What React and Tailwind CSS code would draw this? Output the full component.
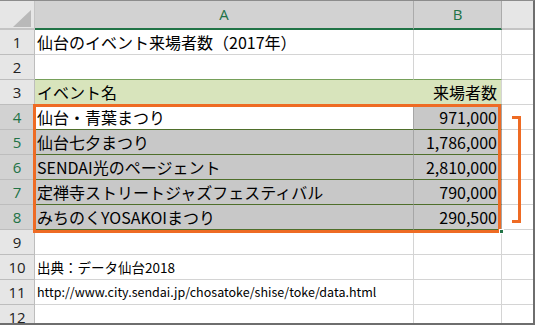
import React from 'react';

const rows = [
  { a: '仙台・青葉まつり', b: '971,000' },
  { a: '仙台七夕まつり', b: '1,786,000' },
  { a: 'SENDAI光のページェント', b: '2,810,000' },
  { a: '定禅寺ストリートジャズフェスティバル', b: '790,000' },
  { a: 'みちのくYOSAKOIまつり', b: '290,500' },
];

const RowHead = ({ n, selected }) => (
  <div
    className={`w-[35px] shrink-0 flex items-center justify-center border-r border-b border-[#bdbdbd] font-['Open_Sans',sans-serif] text-[15px] ${
      selected ? 'bg-[#d2d2d2] text-[#217346]' : 'bg-[#e6e6e6] text-[#222]'
    }`}
  >
    {n}
  </div>
);

const Blank = () => <div className="flex-1 border-b border-[#d4d4d4]" />;

const PlainRow = ({ n, children, textClass = 'text-[16px]' }) => (
  <div className="flex h-[25px]">
    <RowHead n={n} />
    <div className={`w-[379px] shrink-0 relative border-r border-b border-[#d4d4d4] ${textClass}`}>
      {children && (
        <span className="absolute left-[2px] inset-y-0 flex items-center whitespace-nowrap">{children}</span>
      )}
    </div>
    <div className="w-[88px] shrink-0 border-r border-b border-[#d4d4d4]" />
    <Blank />
  </div>
);

export default function App() {
  return (
    <div className="w-[535px] h-[325px] relative overflow-hidden bg-white border-t border-t-[#8c8c8c] border-r-2 border-b-2 border-[#6e6e6e] font-['Noto_Sans_CJK_JP',sans-serif] text-black">
      {/* column headers */}
      <div className="flex h-[29px]">
        <div className="w-[35px] shrink-0 relative bg-[#e6e6e6] border-r border-[#c4c4c4] border-b-2 border-b-[#c4c4c4]">
          <svg className="absolute left-[13px] top-[9px]" width="18" height="17" viewBox="0 0 18 17">
            <path d="M18 0 L18 17 L0 17 Z" fill="#b9b9b9" />
          </svg>
        </div>
        <div className="w-[379px] shrink-0 flex items-center justify-center bg-[#d2d2d2] border-r border-[#ababab] border-b-2 border-b-[#217346] font-['Open_Sans',sans-serif] text-[15px] text-[#217346]">
          A
        </div>
        <div className="w-[88px] shrink-0 flex items-center justify-center bg-[#d2d2d2] border-r border-[#ababab] border-b-2 border-b-[#217346] font-['Open_Sans',sans-serif] text-[15px] text-[#217346]">
          B
        </div>
        <div className="flex-1 bg-[#e6e6e6] border-b-2 border-b-[#c4c4c4]" />
      </div>

      <PlainRow n={1}>仙台のイベント来場者数（2017年）</PlainRow>

      {/* row 2: bottom edge is the top rule of the header band */}
      <div className="flex h-[25px]">
        <RowHead n={2} />
        <div className="w-[379px] shrink-0 border-r border-r-[#d4d4d4] border-b border-b-[#76a05a]" />
        <div className="w-[88px] shrink-0 border-r border-r-[#d4d4d4] border-b border-b-[#76a05a]" />
        <Blank />
      </div>

      {/* row 3: header band */}
      <div className="flex h-[25px]">
        <RowHead n={3} />
        <div className="w-[379px] shrink-0 flex items-center pl-[2px] bg-[#d8e4bc] border-r border-r-[#d8e4bc] border-b border-b-[#5a7d35] text-[16px]">
          イベント名
        </div>
        <div className="w-[88px] shrink-0 flex items-center justify-end pr-[4px] bg-[#d8e4bc] border-r border-r-[#d4d4d4] border-b border-b-[#5a7d35] text-[16px]">
          来場者数
        </div>
        <Blank />
      </div>

      {rows.map((r, i) => (
        <div key={r.a} className="flex h-[25px]">
          <RowHead n={i + 4} selected />
          <div
            className={`w-[379px] shrink-0 flex items-center pl-[2px] whitespace-nowrap border-r border-r-[#a6a6a6] border-b border-b-[#4f6f2b] text-[16px] ${
              i === 0 ? 'bg-white' : 'bg-[#c8c8c8]'
            }`}
          >
            {r.a}
          </div>
          <div className="w-[88px] shrink-0 flex items-center justify-end pr-[4px] bg-[#c8c8c8] border-r border-r-[#a6a6a6] border-b border-b-[#4f6f2b] text-[16px]">
            {r.b}
          </div>
          <Blank />
        </div>
      ))}

      <PlainRow n={9} />
      <PlainRow n={10} textClass="text-[13.5px]">出典：データ仙台2018</PlainRow>
      <PlainRow n={11} textClass="text-[12.5px]">http://www.city.sendai.jp/chosatoke/shise/toke/data.html</PlainRow>
      <PlainRow n={12} />

      {/* highlight frame around the data rows */}
      <div className="absolute left-[33px] top-[103px] w-[468px] h-[129px] border-[3px] border-[#ee6b24] pointer-events-none" />
      <div className="absolute left-[499px] top-[228px] w-[5px] h-[5px] bg-[#217346] border border-white" />

      {/* bracket to the right of the figures */}
      <div className="absolute left-[512px] top-[115px] w-[9px] h-[107px] border-t-[3px] border-r-[3px] border-b-[3px] border-[#ee6b24]" />
    </div>
  );
}
